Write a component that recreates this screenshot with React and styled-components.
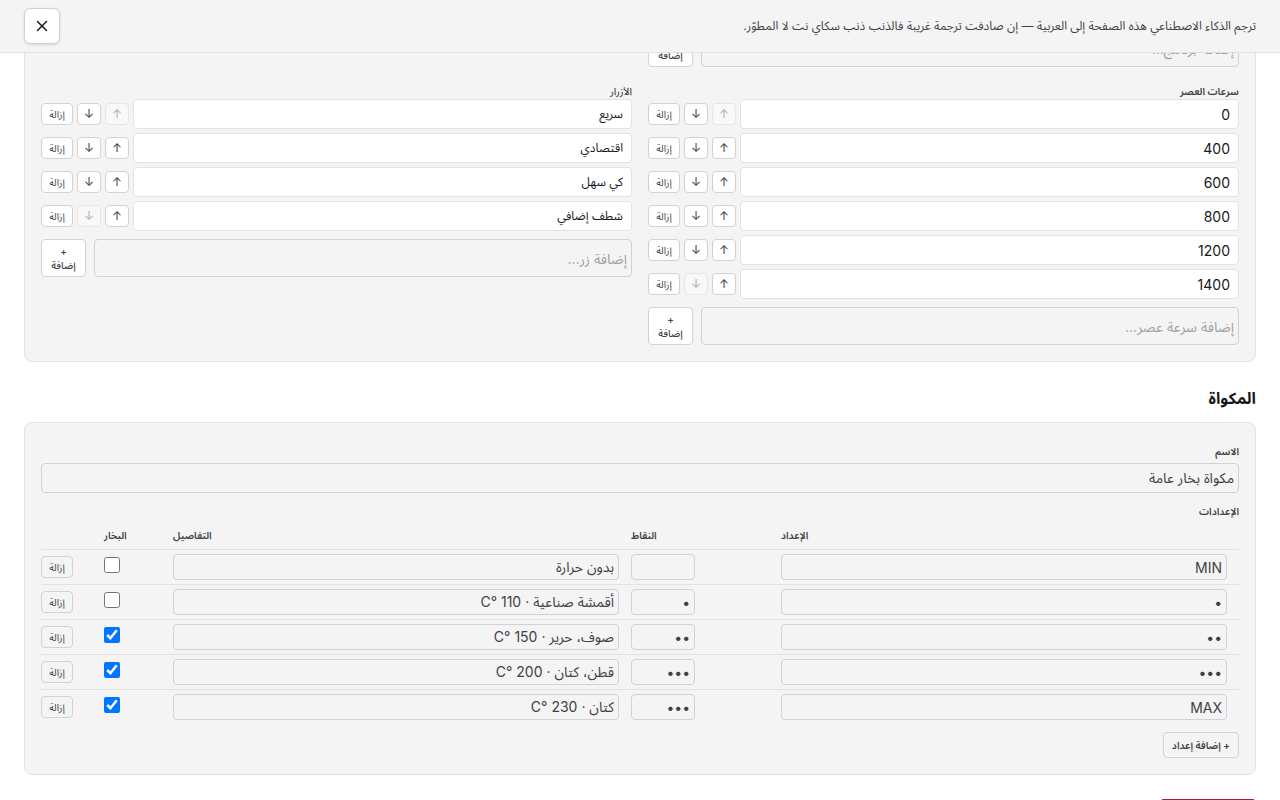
import React, { useState } from "react";
import styled, { createGlobalStyle, css } from "styled-components";
import { X } from "lucide-react";

const THEME = {
  ink: "#18181b",
  inkSoft: "#3f3f46",
  placeholder: "#a1a1a1",
  panel: "#f4f4f4",
  line: "#e2e2e2",
  lineStrong: "#d2d2d4",
  accent: "#0075ff",
  danger: "#b8142f",
};

const GlobalStyle = createGlobalStyle`
  * {
    box-sizing: border-box;
  }

  body {
    margin: 0;
    background: white;
    color: ${THEME.ink};
    font-family: Inter, "Noto Sans Arabic", "DejaVu Sans Condensed", sans-serif;
    font-size: 14px;
    line-height: 20px;
  }

  button,
  input {
    font-family: inherit;
  }
`;

const Banner = styled.header`
  position: fixed;
  inset: 0 0 auto 0;
  z-index: 10;
  display: flex;
  align-items: center;
  justify-content: space-between;
  padding: 8px 24px;
  background: ${THEME.panel};
  border-bottom: 1px solid ${THEME.line};

  p {
    margin: 0;
    font-size: 12px;
    color: ${THEME.inkSoft};
  }
`;

const CloseButton = styled.button`
  display: flex;
  align-items: center;
  justify-content: center;
  width: 36px;
  height: 36px;
  padding: 0;
  border: 1px solid ${THEME.lineStrong};
  border-radius: 6px;
  background: white;
  color: ${THEME.ink};
  box-shadow: 0 1px 3px rgba(0, 0, 0, 0.12);
  cursor: pointer;
`;

const Page = styled.main`
  padding: 4px 24px 24px;
`;

const Panel = styled.section`
  padding: 16px;
  border: 1px solid ${THEME.line};
  border-radius: 8px;
  background: ${THEME.panel};
`;

const Columns = styled.div`
  display: grid;
  grid-template-columns: repeat(2, minmax(0, 1fr));
  gap: 16px;
  align-items: start;
`;

const Group = styled.div`
  grid-column: ${({ $column }) => $column || "auto"};
`;

const labelText = css`
  font-size: 10px;
  line-height: 16px;
  color: ${THEME.inkSoft};
`;

const GroupLabel = styled.div`
  ${labelText}
  font-weight: ${({ $regular }) => ($regular ? 500 : 600)};
`;

const FieldLabel = styled.label`
  ${labelText}
  display: block;
  margin-bottom: 4px;
  font-weight: 600;
`;

const List = styled.ul`
  display: grid;
  gap: 4px;
  margin: 0;
  padding: 0;
  list-style: none;
`;

const ListRow = styled.li`
  display: flex;
  align-items: center;
  gap: 4px;
`;

const ItemInput = styled.input`
  flex: 1;
  min-width: 0;
  height: 30px;
  padding: 0 8px;
  border: 1px solid ${THEME.line};
  border-radius: 4px;
  background: white;
  color: ${THEME.ink};
  font-size: ${({ $small }) => ($small ? "12px" : "14px")};
`;

const TextInput = styled.input`
  width: ${({ $width }) => $width || "100%"};
  height: ${({ $height }) => $height || "26px"};
  padding: 0 4px;
  border: 1px solid ${THEME.lineStrong};
  border-radius: 4px;
  background: transparent;
  color: ${THEME.inkSoft};
  font-size: 14px;
  display: block;

  &::placeholder {
    color: ${THEME.placeholder};
    opacity: 1;
  }
`;

const SmallButton = styled.button`
  display: inline-flex;
  align-items: center;
  justify-content: center;
  flex: none;
  width: ${({ $icon }) => ($icon ? "24px" : "32px")};
  height: 22px;
  padding: 0;
  border: 1px solid ${THEME.lineStrong};
  border-radius: 4px;
  background: ${({ $ghost }) => ($ghost ? "transparent" : "white")};
  color: ${THEME.inkSoft};
  font-size: ${({ $icon }) => ($icon ? "12px" : "10px")};
  line-height: 14px;
  cursor: pointer;

  &:disabled {
    opacity: 0.4;
    cursor: default;
  }
`;

const AddRow = styled.form`
  display: flex;
  gap: 8px;
  margin-top: 8px;

  input {
    flex: 1;
    height: 38px;
  }
`;

const AddButton = styled.button`
  width: 45px;
  padding: 0 8px;
  border: 1px solid ${THEME.lineStrong};
  border-radius: 4px;
  background: white;
  color: ${THEME.inkSoft};
  font-size: 10px;
  font-weight: 500;
  line-height: 14px;
  cursor: pointer;
`;

const Heading = styled.h2`
  margin: 24px 0 12px;
  font-size: 16px;
  font-weight: 700;
  line-height: 24px;
`;

const Field = styled.div`
  padding-top: 4px;
  margin: 0 0 10px;
`;

const SettingsTable = styled.table`
  width: 100%;
  margin-top: 4px;
  table-layout: fixed;
  border-collapse: separate;
  border-spacing: 0;

  th {
    ${labelText}
    padding: 4px 12px 6px 0;
    text-align: left;
    font-weight: 600;
  }

  td {
    height: 35px;
    padding: 0;
    border-top: 1px solid ${THEME.line};
    text-align: left;
  }
`;

const SettingCol = styled.col`
  width: ${({ $width }) => $width || "auto"};
`;

const InputCell = styled.td`
  && {
    padding-right: 12px;
  }

  input {
    margin-right: auto;
  }
`;

const Checkbox = styled.input`
  width: 16px;
  height: 16px;
  margin: 0;
  accent-color: ${THEME.accent};
`;

const AddSetting = styled.button`
  display: block;
  height: 26px;
  margin-top: 8px;
  padding: 0 8px;
  border: 1px solid ${THEME.lineStrong};
  border-radius: 4px;
  background: transparent;
  color: ${THEME.inkSoft};
  font-size: 10px;
  font-weight: 600;
  cursor: pointer;
`;

const DangerButton = styled.button`
  display: block;
  width: 96px;
  height: 32px;
  margin-top: 24px;
  border: none;
  border-radius: 4px;
  background: ${THEME.danger};
  color: white;
  font-size: 12px;
  font-weight: 500;
  cursor: pointer;
`;

const SPEEDS = ["0", "400", "600", "800", "1200", "1400"];
const BUTTONS = ["سريع", "اقتصادي", "كي سهل", "شطف إضافي"];

const SETTINGS = [
  { name: "MIN", dots: "", details: "بدون حرارة", steam: false },
  { name: "•", dots: "•", details: "أقمشة صناعية · 110 °C", steam: false },
  { name: "••", dots: "••", details: "صوف، حرير · 150 °C", steam: true },
  { name: "•••", dots: "•••", details: "قطن، كتان · 200 °C", steam: true },
  { name: "MAX", dots: "•••", details: "كتان · 230 °C", steam: true },
];

const AddItem = ({ placeholder, onAdd }) => {
  const [value, setValue] = useState("");

  const handleSubmit = (event) => {
    event.preventDefault();
    if (!value.trim()) return;
    onAdd?.(value.trim());
    setValue("");
  };

  return (
    <AddRow onSubmit={handleSubmit}>
      <TextInput
        aria-label={placeholder}
        onChange={(event) => setValue(event.target.value)}
        placeholder={placeholder}
        value={value}
      />
      <AddButton type="submit">+ إضافة</AddButton>
    </AddRow>
  );
};

const EditableList = ({ label, initial, placeholder, column, arabic }) => {
  const [items, setItems] = useState(initial);

  const move = (index, step) => {
    const next = [...items];
    [next[index], next[index + step]] = [next[index + step], next[index]];
    setItems(next);
  };

  return (
    <Group $column={column}>
      <GroupLabel $regular={arabic}>{label}</GroupLabel>
      <List>
        {items.map((item, index) => (
          <ListRow key={index}>
            <ItemInput
              $small={arabic}
              aria-label={`${label} ${index + 1}`}
              onChange={(event) =>
                setItems(items.map((old, i) => (i === index ? event.target.value : old)))
              }
              value={item}
            />
            <SmallButton
              $icon
              aria-label="أعلى"
              disabled={index === 0}
              onClick={() => move(index, -1)}
              type="button"
            >
              ↑
            </SmallButton>
            <SmallButton
              $icon
              aria-label="أسفل"
              disabled={index === items.length - 1}
              onClick={() => move(index, 1)}
              type="button"
            >
              ↓
            </SmallButton>
            <SmallButton
              onClick={() => setItems(items.filter((_, i) => i !== index))}
              type="button"
            >
              إزالة
            </SmallButton>
          </ListRow>
        ))}
      </List>
      <AddItem onAdd={(value) => setItems([...items, value])} placeholder={placeholder} />
    </Group>
  );
};

const IronSettings = () => {
  const [rows, setRows] = useState(SETTINGS);

  const update = (index, key, value) =>
    setRows(rows.map((row, i) => (i === index ? { ...row, [key]: value } : row)));

  return (
    <>
      <GroupLabel>الإعدادات</GroupLabel>
      <SettingsTable>
        <colgroup>
          <SettingCol />
          <SettingCol $width="150px" />
          <SettingCol />
          <SettingCol $width="69px" />
          <SettingCol $width="63px" />
        </colgroup>
        <thead>
          <tr>
            <th>الإعداد</th>
            <th>النقاط</th>
            <th>التفاصيل</th>
            <th>البخار</th>
            <th />
          </tr>
        </thead>
        <tbody>
          {rows.map((row, index) => (
            <tr key={index}>
              <InputCell>
                <TextInput
                  aria-label="الإعداد"
                  onChange={(event) => update(index, "name", event.target.value)}
                  value={row.name}
                />
              </InputCell>
              <InputCell>
                <TextInput
                  $width="64px"
                  aria-label="النقاط"
                  onChange={(event) => update(index, "dots", event.target.value)}
                  value={row.dots}
                />
              </InputCell>
              <InputCell>
                <TextInput
                  aria-label="التفاصيل"
                  onChange={(event) => update(index, "details", event.target.value)}
                  value={row.details}
                />
              </InputCell>
              <td>
                <Checkbox
                  aria-label="البخار"
                  checked={row.steam}
                  onChange={(event) => update(index, "steam", event.target.checked)}
                  type="checkbox"
                />
              </td>
              <td>
                <SmallButton
                  $ghost
                  onClick={() => setRows(rows.filter((_, i) => i !== index))}
                  type="button"
                >
                  إزالة
                </SmallButton>
              </td>
            </tr>
          ))}
        </tbody>
      </SettingsTable>
      <AddSetting
        onClick={() => setRows([...rows, { name: "", dots: "", details: "", steam: false }])}
        type="button"
      >
        + إضافة إعداد
      </AddSetting>
    </>
  );
};

const App = () => {
  const [showBanner, setShowBanner] = useState(true);
  const [name, setName] = useState("مكواة بخار عامة");

  return (
    <div dir="rtl" lang="ar">
      <GlobalStyle />
      {showBanner && (
        <Banner>
          <p>
            ترجم الذكاء الاصطناعي هذه الصفحة إلى العربية — إن صادفت ترجمة غريبة فالذنب ذنب سكاي نت
            لا المطوّر.
          </p>
          <CloseButton aria-label="إغلاق" onClick={() => setShowBanner(false)} type="button">
            <X size={18} strokeWidth={2} />
          </CloseButton>
        </Banner>
      )}

      <Page>
        <Panel>
          <Columns>
            <Group>
              <AddItem placeholder="إضافة برنامج…" />
            </Group>
            <EditableList
              column={1}
              initial={SPEEDS}
              label="سرعات العصر"
              placeholder="إضافة سرعة عصر…"
            />
            <EditableList arabic initial={BUTTONS} label="الأزرار" placeholder="إضافة زر…" />
          </Columns>
        </Panel>

        <Heading>المكواة</Heading>
        <Panel>
          <Field>
            <FieldLabel htmlFor="iron-name">الاسم</FieldLabel>
            <TextInput
              $height="30px"
              id="iron-name"
              onChange={(event) => setName(event.target.value)}
              value={name}
            />
          </Field>
          <IronSettings />
        </Panel>

        <DangerButton type="button">إعادة تعيين</DangerButton>
      </Page>
    </div>
  );
};

export default App;
